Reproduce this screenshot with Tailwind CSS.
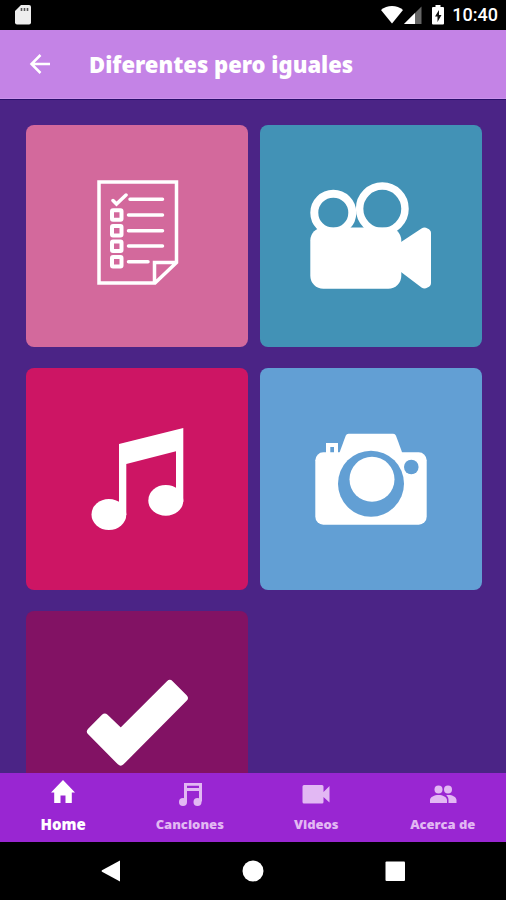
<!DOCTYPE html>
<html lang="es">
<head>
    <meta charset="UTF-8">
    <meta name="viewport" content="width=device-width, initial-scale=1.0">
    <title>Diferentes pero iguales</title>
    <script src="https://cdn.jsdelivr.net/npm/@tailwindcss/browser@4"></script>
</head>
<body class="bg-black">
    <div class="flex h-screen flex-col overflow-hidden font-['Noto_Sans',sans-serif] text-white">
        <!-- Status bar -->
        <div class="flex h-[30px] shrink-0 items-center justify-between pl-[15px] pr-2">
            <svg class="h-5 w-4" viewBox="0 0 16 20" fill="none">
                <path d="M6 0h8a2 2 0 0 1 2 2v15.500a2 2 0 0 1-2 2H2a2 2 0 0 1-2-2V6z" fill="#eee"/>
                <path d="M6.500 3v3M9.500 3v3M12.500 3v3" stroke="#555" stroke-width="1.600"/>
            </svg>
            <div class="flex items-center">
                <svg class="h-5 w-[22px]" viewBox="0 0 22 20" fill="#fff">
                    <path d="M0 5C6-.5 16-.5 22 5L11 18.500z"/>
                </svg>
                <svg class="ml-px h-5 w-[18px]" viewBox="0 0 18 20">
                    <path d="M17.500 1.500V19H0z" fill="#666"/>
                    <path d="M11 8v11H0z" fill="#fff"/>
                </svg>
                <svg class="ml-2.5 h-5 w-3" viewBox="0 0 12 20">
                    <path d="M3.500 0h5v2H11a1 1 0 0 1 1 1v15.500a1 1 0 0 1-1 1H1a1 1 0 0 1-1-1V3a1 1 0 0 1 1-1h2.500z" fill="#fff"/>
                    <path d="M7 5 3 11.500h2.500V17L9.500 10H7z" fill="#111"/>
                </svg>
                <span class="ml-2 font-['Roboto',sans-serif] text-lg font-medium leading-5">10:40</span>
            </div>
        </div>

        <!-- Header -->
        <header class="flex h-[69px] shrink-0 items-center border-b border-[#cb92ec] bg-[#c483e6] pl-7">
            <button type="button" aria-label="Atrás" class="h-6 w-6">
                <svg class="h-6 w-6" viewBox="0 0 24 24" fill="none" stroke="#fff" stroke-width="2.500">
                    <path d="M22 12H4M12.500 3 3.500 12l9 9"/>
                </svg>
            </button>
            <h1 class="ml-[37px] text-[22px] font-black leading-7">Diferentes pero iguales</h1>
        </header>

        <!-- Tiles -->
        <main class="grid min-h-0 flex-1 grid-cols-2 content-start gap-x-3 gap-y-[21px] overflow-hidden border-t border-[#2b0f6c] bg-[#4b2486] pl-[26px] pr-6 pt-[25px]">
            <a href="#actividades" aria-label="Actividades" class="aspect-square rounded-lg bg-[#d3699c]">
                <svg class="h-full w-full" viewBox="0 0 222 222" fill="none" stroke="#fff" stroke-width="3.500">
                    <path d="M73 57h77.500v80.500L129 158H73zM128.500 158v-20.500h22"/>
                    <g stroke-width="4">
                        <rect x="86" y="85.300" width="9.500" height="9.500" rx="1"/>
                        <rect x="86" y="101" width="9.500" height="9.500" rx="1"/>
                        <rect x="86" y="116.500" width="9.500" height="9.500" rx="1"/>
                        <rect x="86" y="132" width="9.500" height="9.500" rx="1"/>
                    </g>
                    <path stroke-linecap="round" d="M87 75.500l3.500 3.500L100 70M104 74.300h32.500M102.500 90h34M102.500 105.700h34M102.500 121h34M102.500 136.700H122"/>
                </svg>
            </a>
            <a href="#peliculas" aria-label="Películas" class="aspect-square rounded-lg bg-[#4292b6]">
                <svg class="h-full w-full" viewBox="0 0 222 222" fill="#fff">
                    <circle cx="73.300" cy="87.700" r="19" fill="none" stroke="#fff" stroke-width="8"/>
                    <circle cx="122.300" cy="83.800" r="22.700" fill="none" stroke="#fff" stroke-width="7.500"/>
                    <rect x="50.300" y="102.500" width="91" height="61.200" rx="13"/>
                    <path d="M141 117l20.500-13.500q3-2 6 0 3.500 1.500 3.500 4.500v50q0 3-3.500 4.500-3 2-6 0L141 147z"/>
                </svg>
            </a>
            <a href="#musica" aria-label="Música" class="aspect-square rounded-lg bg-[#cd1564]">
                <svg class="h-full w-full" viewBox="0 0 222 222" fill="#fff">
                    <path d="M93 76l64.300-16v74H150V83.300L100.300 96v51H93z"/>
                    <ellipse cx="82.900" cy="146.500" rx="17.400" ry="15.400"/>
                    <ellipse cx="139.800" cy="132.400" rx="17.500" ry="15.300"/>
                </svg>
            </a>
            <a href="#fotos" aria-label="Fotos" class="aspect-square rounded-lg bg-[#629fd4]">
                <svg class="h-full w-full" viewBox="0 0 222 222" fill="#fff">
                    <rect x="55.300" y="84.300" width="111.400" height="72.400" rx="8"/>
                    <path d="M79 86l6.700-18.300Q86.500 65.700 88.500 65.700h44.700q2 0 2.800 2L142.700 86z"/>
                    <path fill-rule="evenodd" d="M66 75h12v10H66zM70.300 79v6H74v-6z"/>
                    <circle cx="111" cy="115.700" r="33" fill="#629fd4"/>
                    <circle cx="112" cy="111.300" r="22.500"/>
                    <circle cx="151.300" cy="99" r="7.300" fill="#629fd4"/>
                </svg>
            </a>
            <a href="#evaluacion" aria-label="Evaluación" class="aspect-square rounded-lg bg-[#821264]">
                <svg class="h-full w-full" viewBox="0 0 222 222" fill="#fff" stroke="#fff" stroke-width="8" stroke-linejoin="round">
                    <path d="M65 120.500l13.800-13.800L94.700 122l49.100-49 14 14-63.100 63.500z"/>
                </svg>
            </a>
        </main>

        <!-- Bottom tabs -->
        <nav class="grid h-[69px] shrink-0 grid-cols-4 bg-[#9926d2] text-[13px] font-black leading-5 text-[#e2b8f3]">
            <a href="#home" class="flex flex-col items-center pt-[5px] text-white">
                <svg class="h-7 w-7" viewBox="0 0 28 28" fill="currentColor">
                    <path d="M11.500 25v-7.500h5V25h6.300V14.500H26L14 2 2 14.500h3.200V25z"/>
                </svg>
                <span class="mt-2 text-[15px] leading-5">Home</span>
            </a>
            <a href="#canciones" class="flex flex-col items-center pt-[5px]">
                <svg class="h-7 w-7" viewBox="0 0 28 28" fill="currentColor">
                    <path fill-rule="evenodd" d="M8 5h18v18.500h-3V13H11v11H8zM11 7.800V10h12V7.800z"/>
                    <circle cx="7" cy="24" r="4"/>
                    <circle cx="21.500" cy="24" r="4"/>
                </svg>
                <span class="mt-2">Canciones</span>
            </a>
            <a href="#videos" class="flex flex-col items-center pt-[5px]">
                <svg class="h-7 w-7" viewBox="0 0 28 28" fill="currentColor">
                    <path d="M2 7h18a1.500 1.500 0 0 1 1.500 1.500V14L27.500 8v16.500L21.500 19v5a1.500 1.500 0 0 1-1.500 1.500H2A1.500 1.500 0 0 1 .5 24V8.500A1.500 1.500 0 0 1 2 7z"/>
                </svg>
                <span class="mt-2">Videos</span>
            </a>
            <a href="#acerca" class="flex flex-col items-center pt-[5px]">
                <svg class="h-7 w-7" viewBox="0 0 28 28" fill="currentColor">
                    <circle cx="9.500" cy="11.500" r="4"/>
                    <circle cx="19" cy="11.500" r="4"/>
                    <path d="M1 25v-3c0-3 4.500-5 8.500-5s8.500 2 8.500 5v3zM19.500 25v-3c0-2-.8-3.500-2.300-4.700 4.500-1 10.300 1.200 10.300 4.700v3z"/>
                </svg>
                <span class="mt-2">Acerca de</span>
            </a>
        </nav>

        <!-- System buttons -->
        <div class="grid h-[58px] shrink-0 grid-cols-3 items-center justify-items-center bg-black px-10">
            <button type="button" aria-label="Volver">
                <svg class="h-[22px] w-[22px]" viewBox="0 0 22 22" fill="#fff"><path d="M20 .5v21L2 11.800q-1-.8 0-1.600z"/></svg>
            </button>
            <button type="button" aria-label="Inicio">
                <svg class="h-[22px] w-[22px]" viewBox="0 0 22 22" fill="#fff"><circle cx="11" cy="11" r="10.500"/></svg>
            </button>
            <button type="button" aria-label="Recientes">
                <svg class="h-[22px] w-[22px]" viewBox="0 0 22 22" fill="#fff"><rect x="1.500" y="1.500" width="19.500" height="19.500" rx="1"/></svg>
            </button>
        </div>
    </div>
</body>
</html>
